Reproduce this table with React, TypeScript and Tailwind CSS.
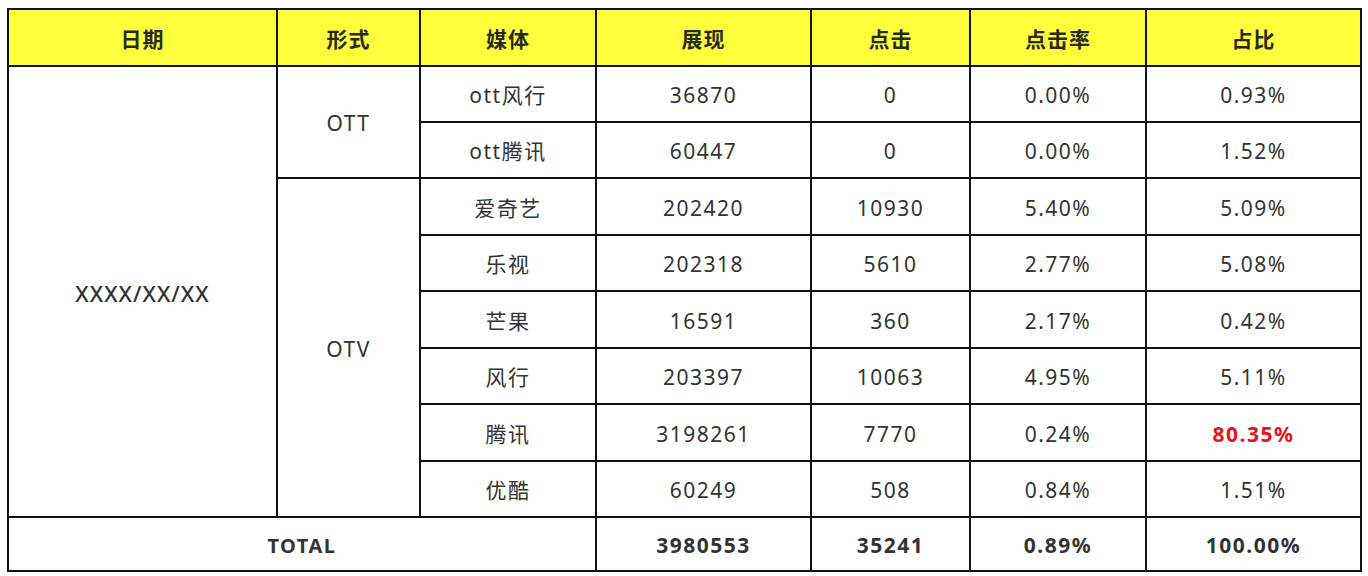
import React from "react";

type Row = { media: string; views: string; clicks: string; ctr: string; share: string; hot?: boolean };

const ottRows: Row[] = [
  { media: "ott风行", views: "36870", clicks: "0", ctr: "0.00%", share: "0.93%" },
  { media: "ott腾讯", views: "60447", clicks: "0", ctr: "0.00%", share: "1.52%" },
];

const otvRows: Row[] = [
  { media: "爱奇艺", views: "202420", clicks: "10930", ctr: "5.40%", share: "5.09%" },
  { media: "乐视", views: "202318", clicks: "5610", ctr: "2.77%", share: "5.08%" },
  { media: "芒果", views: "16591", clicks: "360", ctr: "2.17%", share: "0.42%" },
  { media: "风行", views: "203397", clicks: "10063", ctr: "4.95%", share: "5.11%" },
  { media: "腾讯", views: "3198261", clicks: "7770", ctr: "0.24%", share: "80.35%", hot: true },
  { media: "优酷", views: "60249", clicks: "508", ctr: "0.84%", share: "1.51%" },
];

const headers = ["日期", "形式", "媒体", "展现", "点击", "点击率", "占比"];
const widths = ["w-[269px]", "w-[143px]", "w-[176px]", "w-[215px]", "w-[159px]", "w-[176px]", "w-[215px]"];

const cell = "border-2 border-[#111] text-center align-middle px-0 pt-[4px] pb-0";

function DataCells({ r }: { r: Row }) {
  return (
    <>
      <td className={cell}>{r.media}</td>
      <td className={cell}>{r.views}</td>
      <td className={cell}>{r.clicks}</td>
      <td className={cell}>{r.ctr}</td>
      <td className={`${cell} ${r.hot ? "font-bold text-[#e8141b]" : ""}`}>{r.share}</td>
    </>
  );
}

export default function App() {
  return (
    <div className="w-[1368px] h-[576px] bg-white pt-[8px] pl-[7px] font-['Noto_Sans','Noto_Sans_CJK_SC',sans-serif] text-[#333]">
      <table className="border-collapse table-fixed w-[1353px] text-[21px] tracking-[1.5px]">
        <colgroup>
          {widths.map((w, i) => <col key={i} className={w} />)}
        </colgroup>
        <thead>
          <tr className="h-[57px] bg-[#fefe3d]">
            {headers.map((h) => (
              <th key={h} className={`${cell} text-[21px] font-bold tracking-[1px] text-[#2a2a1a]`}>{h}</th>
            ))}
          </tr>
        </thead>
        <tbody>
          {ottRows.map((r, i) => (
            <tr key={r.media} className="h-[56px]">
              {i === 0 && (
                <>
                  <td rowSpan={8} className={`${cell} font-medium text-[22px] tracking-[1px]`}>XXXX/XX/XX</td>
                  <td rowSpan={2} className={cell}>OTT</td>
                </>
              )}
              <DataCells r={r} />
            </tr>
          ))}
          {otvRows.map((r, i) => (
            <tr key={r.media} className="h-[56.5px]">
              {i === 0 && <td rowSpan={6} className={cell}>OTV</td>}
              <DataCells r={r} />
            </tr>
          ))}
          <tr className="h-[54px] font-bold">
            <td colSpan={3} className={`${cell} text-[20px]`}>TOTAL</td>
            <td className={cell}>3980553</td>
            <td className={cell}>35241</td>
            <td className={cell}>0.89%</td>
            <td className={cell}>100.00%</td>
          </tr>
        </tbody>
      </table>
    </div>
  );
}
